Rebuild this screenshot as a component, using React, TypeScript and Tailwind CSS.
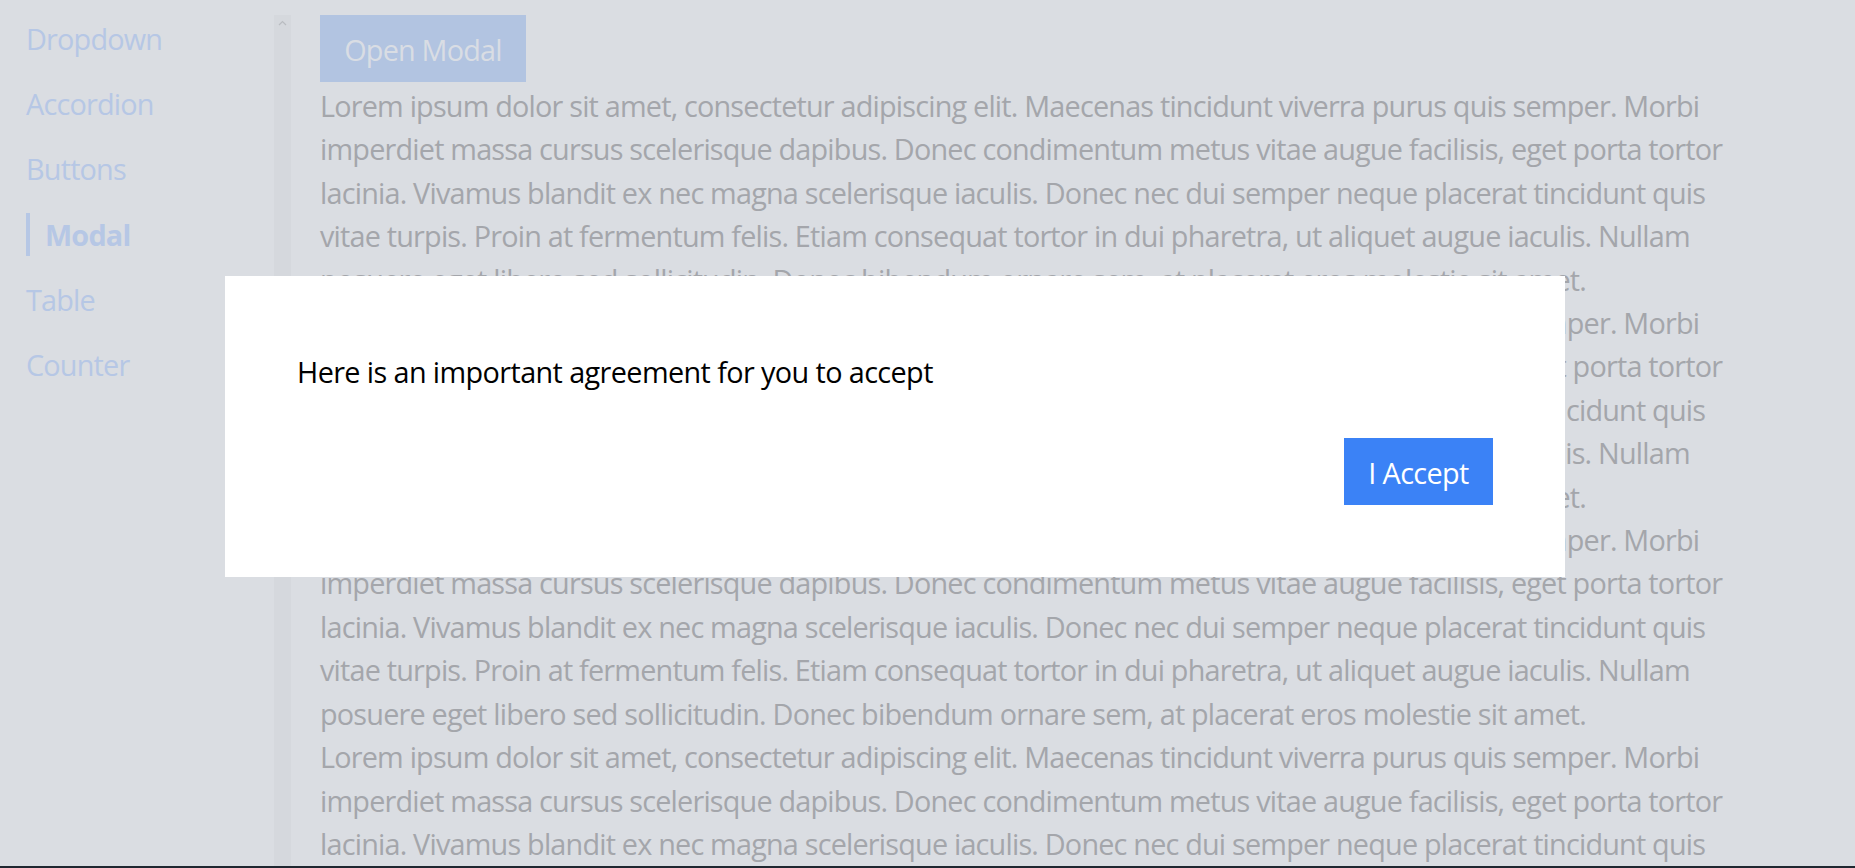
import React from 'react';

const LOREM =
  'Lorem ipsum dolor sit amet, consectetur adipiscing elit. Maecenas tincidunt viverra purus quis semper. Morbi imperdiet massa cursus scelerisque dapibus. Donec condimentum metus vitae augue facilisis, eget porta tortor lacinia. Vivamus blandit ex nec magna scelerisque iaculis. Donec nec dui semper neque placerat tincidunt quis vitae turpis. Proin at fermentum felis. Etiam consequat tortor in dui pharetra, ut aliquet augue iaculis. Nullam posuere eget libero sed sollicitudin. Donec bibendum ornare sem, at placerat eros molestie sit amet.';

const navItems = ['Dropdown', 'Accordion', 'Buttons', 'Modal', 'Table', 'Counter'];

function SideNav({ active }: { active: string }) {
  return (
    <nav className="w-[274px] shrink-0 pt-[17px] pl-[26px] flex flex-col gap-[22px] tracking-[-0.8px]">
      {navItems.map((item) =>
        item === active ? (
          <div key={item} className="border-l-4 border-[#b6c7e5] pl-[15px] font-bold text-[#b6c7e5]">
            {item}
          </div>
        ) : (
          <div key={item} className="text-[#b6c7e5]">
            {item}
          </div>
        )
      )}
    </nav>
  );
}

function ScrollStrip() {
  return (
    <div className="w-[17px] shrink-0 mt-[15px] bg-[#d5d8dd] flex justify-center pt-[4px]">
      <svg width="9" height="6" viewBox="0 0 9 6" className="mt-[1px]">
        <path d="M1 5 L4.5 1.5 L8 5" fill="none" stroke="#b9bcc1" strokeWidth="1.2" />
      </svg>
    </div>
  );
}

export default function App() {
  return (
    <div
      className="h-screen w-full overflow-hidden flex flex-col bg-[#dadde2] text-[28.8px] leading-[43.2px]"
      style={{ fontFamily: '"Open Sans", "Noto Sans", sans-serif' }}
    >
      <div className="flex flex-1 min-h-0">
        <SideNav active="Modal" />
        <ScrollStrip />
        <main className="pl-[29px] pt-[15px] w-[1469px] tracking-[-0.8px]">
          <button className="w-[206px] h-[67px] bg-[#b2c4e1] text-[#d9dde4] text-center pt-[2px]">
            Open Modal
          </button>
          <div className="pt-[2px] leading-[43.4px]">
            {[0, 1, 2, 3].map((i) => (
              <p key={i} className="text-[#a4a6ab]">
                {LOREM}
              </p>
            ))}
          </div>
        </main>
      </div>
      <div className="h-[2px] shrink-0 bg-[#1f2730]" />

      <div className="fixed left-[225px] top-[276px] w-[1340px] h-[301px] bg-white px-[72px] pt-[74px] pb-[72px] flex flex-col">
        <p className="text-black tracking-[-0.6px]">Here is an important agreement for you to accept</p>
        <div className="flex justify-end mt-auto">
          <button className="w-[149px] h-[67px] bg-[#3b82f6] text-white tracking-[-0.6px] pt-[2px]">I Accept</button>
        </div>
      </div>
    </div>
  );
}
